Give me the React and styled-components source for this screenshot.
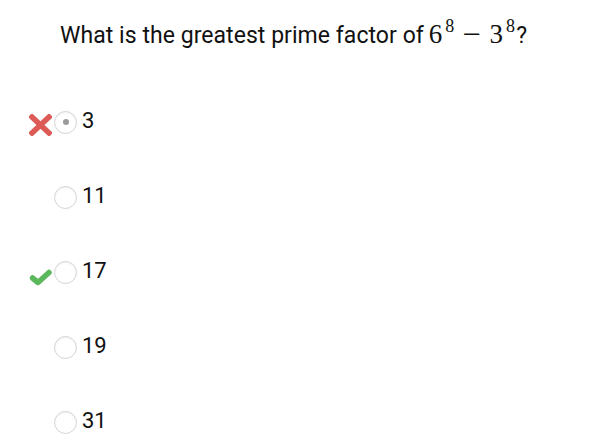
import React from 'react'
import styled, { createGlobalStyle } from 'styled-components'

const GlobalStyle = createGlobalStyle`
  body {
    margin: 0;
    background: #fff;
    font-family: Roboto, 'Liberation Sans', sans-serif;
    color: #111;
  }
`

const options = [
  { label: '3', selected: true, mark: 'wrong' },
  { label: '11' },
  { label: '17', mark: 'right' },
  { label: '19' },
  { label: '31' },
]

const App = () => {
  return (
    <Page>
      <GlobalStyle />
      <Question>
        What is the greatest prime factor of{' '}
        <MathExpr>
          6<Sup>8</Sup>
          <Minus>−</Minus>
          3<Sup>8</Sup>
        </MathExpr>
        ?
      </Question>
      <OptionList>
        {options.map((o) => (
          <Option key={o.label}>
            <MarkSlot>
              {o.mark === 'wrong' && <CrossIcon />}
              {o.mark === 'right' && <CheckIcon />}
            </MarkSlot>
            <Radio $selected={o.selected} />
            <Label>{o.label}</Label>
          </Option>
        ))}
      </OptionList>
    </Page>
  )
}

const CrossIcon = () => (
  <svg width="23" height="22" viewBox="0 0 23 22">
    <path d="M3 3 L20 19 M20 3 L3 19" stroke="#dc5b57" strokeWidth="5.5" strokeLinecap="square" fill="none" />
  </svg>
)

const CheckIcon = () => (
  <svg width="23" height="17" viewBox="0 0 23 17">
    <path d="M3.5 9 L9 13.5 L20 3.5" stroke="#5cb85c" strokeWidth="5.5" strokeLinecap="round" strokeLinejoin="round" fill="none" />
  </svg>
)

const Page = styled.div`
  padding: 20px 0 0 0;
`

const Question = styled.h1`
  margin: 0 0 33px 60px;
  font-size: 23px;
  font-weight: 400;
  line-height: 32px;
  height: 32px;
  white-space: nowrap;
  letter-spacing: 0.05px;
`

const MathExpr = styled.span`
  font-family: 'Liberation Serif', 'DejaVu Serif', serif;
  font-size: 27px;
  line-height: 0;
  margin-left: -1px;
  margin-right: 1px;
`

const Sup = styled.span`
  display: inline-block;
  font-size: 18px;
  line-height: 0;
  position: relative;
  top: -11px;
  margin-left: 3px;
`

const Minus = styled.span`
  display: inline-block;
  transform: scaleX(1.2);
  margin: 0 10px 0 10px;
`

const OptionList = styled.div`
  display: flex;
  flex-direction: column;
`

const Option = styled.div`
  display: flex;
  align-items: center;
  height: 75px;
  padding-left: 29px;
`

const MarkSlot = styled.div`
  width: 25px;
  height: 22px;
  display: flex;
  align-items: flex-end;
  justify-content: flex-start;
  margin-top: 4px;
`

const Radio = styled.span`
  box-sizing: border-box;
  width: 23px;
  height: 23px;
  border-radius: 50%;
  border: 1px solid #d4d4d4;
  box-shadow: inset 0 1px 2px rgba(0, 0, 0, 0.06);
  display: flex;
  align-items: center;
  justify-content: center;
  margin-top: -1px;

  &::after {
    content: '';
    display: ${(p) => (p.$selected ? 'block' : 'none')};
    width: 6px;
    height: 6px;
    border-radius: 50%;
    background: #9a9a9a;
  }
`

const Label = styled.span`
  margin-left: 5px;
  font-size: 22px;
  line-height: 24px;
  margin-top: -4px;
`

export default App
